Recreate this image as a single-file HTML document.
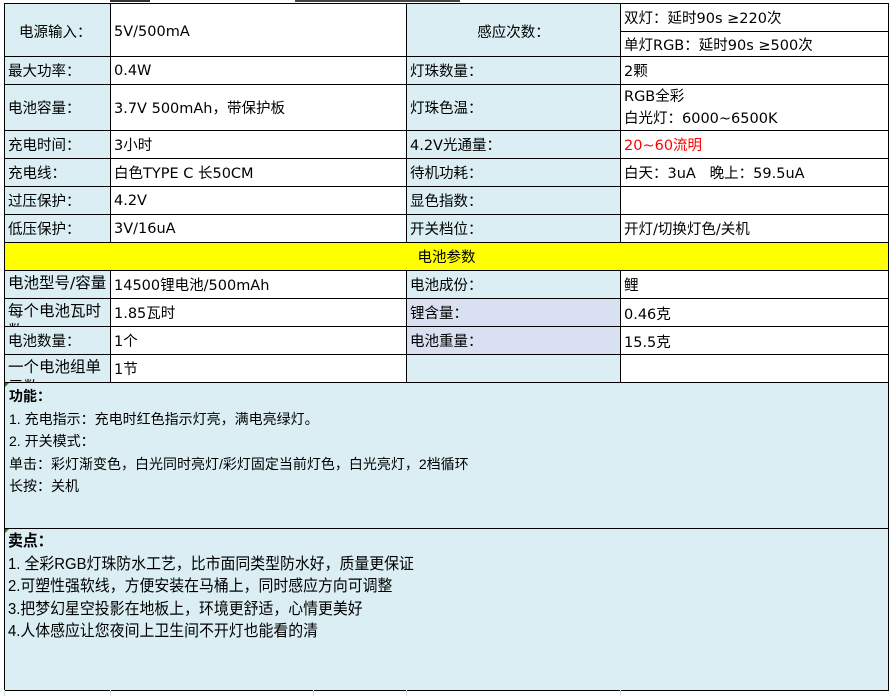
<!DOCTYPE html>
<html><head><meta charset="utf-8"><style>
body{margin:0;width:896px;height:696px;background:#fff;position:relative;overflow:hidden;font-family:"DejaVu Sans","Noto Sans CJK SC",sans-serif;font-size:14.5px;color:#000}
.c{position:absolute;box-sizing:border-box;border:1px solid #000;display:flex;align-items:center;padding-left:3px;overflow:hidden;white-space:nowrap;background:#fff}
.b{background:#DAEEF3}
.p{background:#D9E0F2}
.y{background:#FFFF00;justify-content:center;padding:0}
.w{white-space:normal;align-items:flex-start;padding-top:2px;line-height:20px;word-break:break-all;font-size:15.5px}
.g{position:absolute;top:690px;width:1px;height:6px;background:#ddd}
.box{position:absolute;box-sizing:border-box;border:1px solid #000;background:#DAEEF3;padding:2px 0 0 4px;line-height:22.5px;white-space:nowrap}
.cond{transform:scaleX(0.93);transform-origin:0 0;width:120%;font-family:"Liberation Sans","Noto Sans CJK SC",sans-serif;font-size:16px}
.tri{position:absolute;width:0;height:0;border-top:4px solid #1a8a1a;border-right:4px solid transparent}
</style></head><body>
<div style="position:absolute;left:110px;top:0;width:40px;height:2px;background:#333"></div>
<div style="position:absolute;left:295px;top:0;width:165px;height:2px;background:#444"></div>

<div class="c b" style="left:4px;top:3px;width:107px;height:54px;padding-left:14px;padding-top:3px">电源输入：</div>
<div class="c" style="left:110px;top:3px;width:297px;height:54px;padding-top:3px">5V/500mA</div>
<div class="c b" style="left:406px;top:3px;width:215px;height:54px;justify-content:center;padding:3px 0 0">感应次数：</div>
<div class="c" style="left:620px;top:3px;width:269px;height:29px">双灯：延时90s ≥220次</div>
<div class="c" style="left:620px;top:31px;width:269px;height:26px">单灯RGB：延时90s ≥500次</div>

<div class="c b" style="left:4px;top:56px;width:107px;height:29px">最大功率：</div>
<div class="c" style="left:110px;top:56px;width:297px;height:29px">0.4W</div>
<div class="c b" style="left:406px;top:56px;width:215px;height:29px">灯珠数量：</div>
<div class="c" style="left:620px;top:56px;width:269px;height:29px">2颗</div>

<div class="c b" style="left:4px;top:84px;width:107px;height:47px">电池容量：</div>
<div class="c" style="left:110px;top:84px;width:297px;height:47px">3.7V 500mAh，带保护板</div>
<div class="c b" style="left:406px;top:84px;width:215px;height:47px">灯珠色温：</div>
<div class="c" style="left:620px;top:84px;width:269px;height:47px;white-space:normal;line-height:22px">RGB全彩<br>白光灯：6000~6500K</div>

<div class="c b" style="left:4px;top:130px;width:107px;height:29px">充电时间：</div>
<div class="c" style="left:110px;top:130px;width:297px;height:29px">3小时</div>
<div class="c b" style="left:406px;top:130px;width:215px;height:29px">4.2V光通量：</div>
<div class="c" style="left:620px;top:130px;width:269px;height:29px;color:#f00">20~60流明</div>

<div class="c b" style="left:4px;top:158px;width:107px;height:29px">充电线：</div>
<div class="c" style="left:110px;top:158px;width:297px;height:29px">白色TYPE C 长50CM</div>
<div class="c b" style="left:406px;top:158px;width:215px;height:29px">待机功耗：</div>
<div class="c" style="left:620px;top:158px;width:269px;height:29px">白天：3uA&nbsp;&nbsp; 晚上：59.5uA</div>

<div class="c b" style="left:4px;top:186px;width:107px;height:29px">过压保护：</div>
<div class="c" style="left:110px;top:186px;width:297px;height:29px">4.2V</div>
<div class="c b" style="left:406px;top:186px;width:215px;height:29px">显色指数：</div>
<div class="c" style="left:620px;top:186px;width:269px;height:29px"></div>

<div class="c b" style="left:4px;top:214px;width:107px;height:29px">低压保护：</div>
<div class="c" style="left:110px;top:214px;width:297px;height:29px">3V/16uA</div>
<div class="c b" style="left:406px;top:214px;width:215px;height:29px">开关档位：</div>
<div class="c" style="left:620px;top:214px;width:269px;height:29px">开灯/切换灯色/关机</div>

<div class="c y" style="left:4px;top:242px;width:885px;height:29px">电池参数</div>

<div class="c b w" style="left:4px;top:270px;width:107px;height:29px">电池型号/容量</div>
<div class="c" style="left:110px;top:270px;width:297px;height:29px">14500锂电池/500mAh</div>
<div class="c b" style="left:406px;top:270px;width:215px;height:29px">电池成份：</div>
<div class="c" style="left:620px;top:270px;width:269px;height:29px">鲤</div>

<div class="c b w" style="left:4px;top:298px;width:107px;height:29px">每个电池瓦时数</div>
<div class="c" style="left:110px;top:298px;width:297px;height:29px">1.85瓦时</div>
<div class="c p" style="left:406px;top:298px;width:215px;height:29px;align-items:flex-start;padding-top:3px">锂含量：</div>
<div class="c" style="left:620px;top:298px;width:269px;height:29px;align-items:flex-end;padding-bottom:2px">0.46克</div>

<div class="c b" style="left:4px;top:326px;width:107px;height:29px">电池数量：</div>
<div class="c" style="left:110px;top:326px;width:297px;height:29px">1个</div>
<div class="c p" style="left:406px;top:326px;width:215px;height:29px;align-items:flex-start;padding-top:3px">电池重量：</div>
<div class="c" style="left:620px;top:326px;width:269px;height:29px;align-items:flex-end;padding-bottom:2px">15.5克</div>

<div class="c b w" style="left:4px;top:354px;width:107px;height:29px">一个电池组单元数</div>
<div class="c" style="left:110px;top:354px;width:297px;height:29px">1节</div>
<div class="c b" style="left:406px;top:354px;width:215px;height:29px"></div>
<div class="c" style="left:620px;top:354px;width:269px;height:29px"></div>

<div class="box" style="left:4px;top:382px;width:885px;height:147px;font-family:'Liberation Sans','Noto Sans CJK SC',sans-serif;font-size:14px"><b>功能：</b><br>1. 充电指示：充电时红色指示灯亮，满电亮绿灯。<br>2. 开关模式：<br>单击：彩灯渐变色，白光同时亮灯/彩灯固定当前灯色，白光亮灯，2档循环<br>长按：关机</div>
<div class="tri" style="left:5px;top:383px"></div>
<div class="box" style="left:4px;top:528px;width:885px;height:163px;padding-left:3px"><div class="cond"><b>卖点：</b><br>1. 全彩RGB灯珠防水工艺，比市面同类型防水好，质量更保证<br>2.可塑性强软线，方便安装在马桶上，同时感应方向可调整<br>3.把梦幻星空投影在地板上，环境更舒适，心情更美好<br>4.人体感应让您夜间上卫生间不开灯也能看的清</div></div>
<div class="tri" style="left:5px;top:529px"></div>

<div class="g" style="left:4px"></div>
<div class="g" style="left:110px"></div>
<div class="g" style="left:313px"></div>
<div class="g" style="left:406px"></div>
<div class="g" style="left:620px"></div>
</body></html>
